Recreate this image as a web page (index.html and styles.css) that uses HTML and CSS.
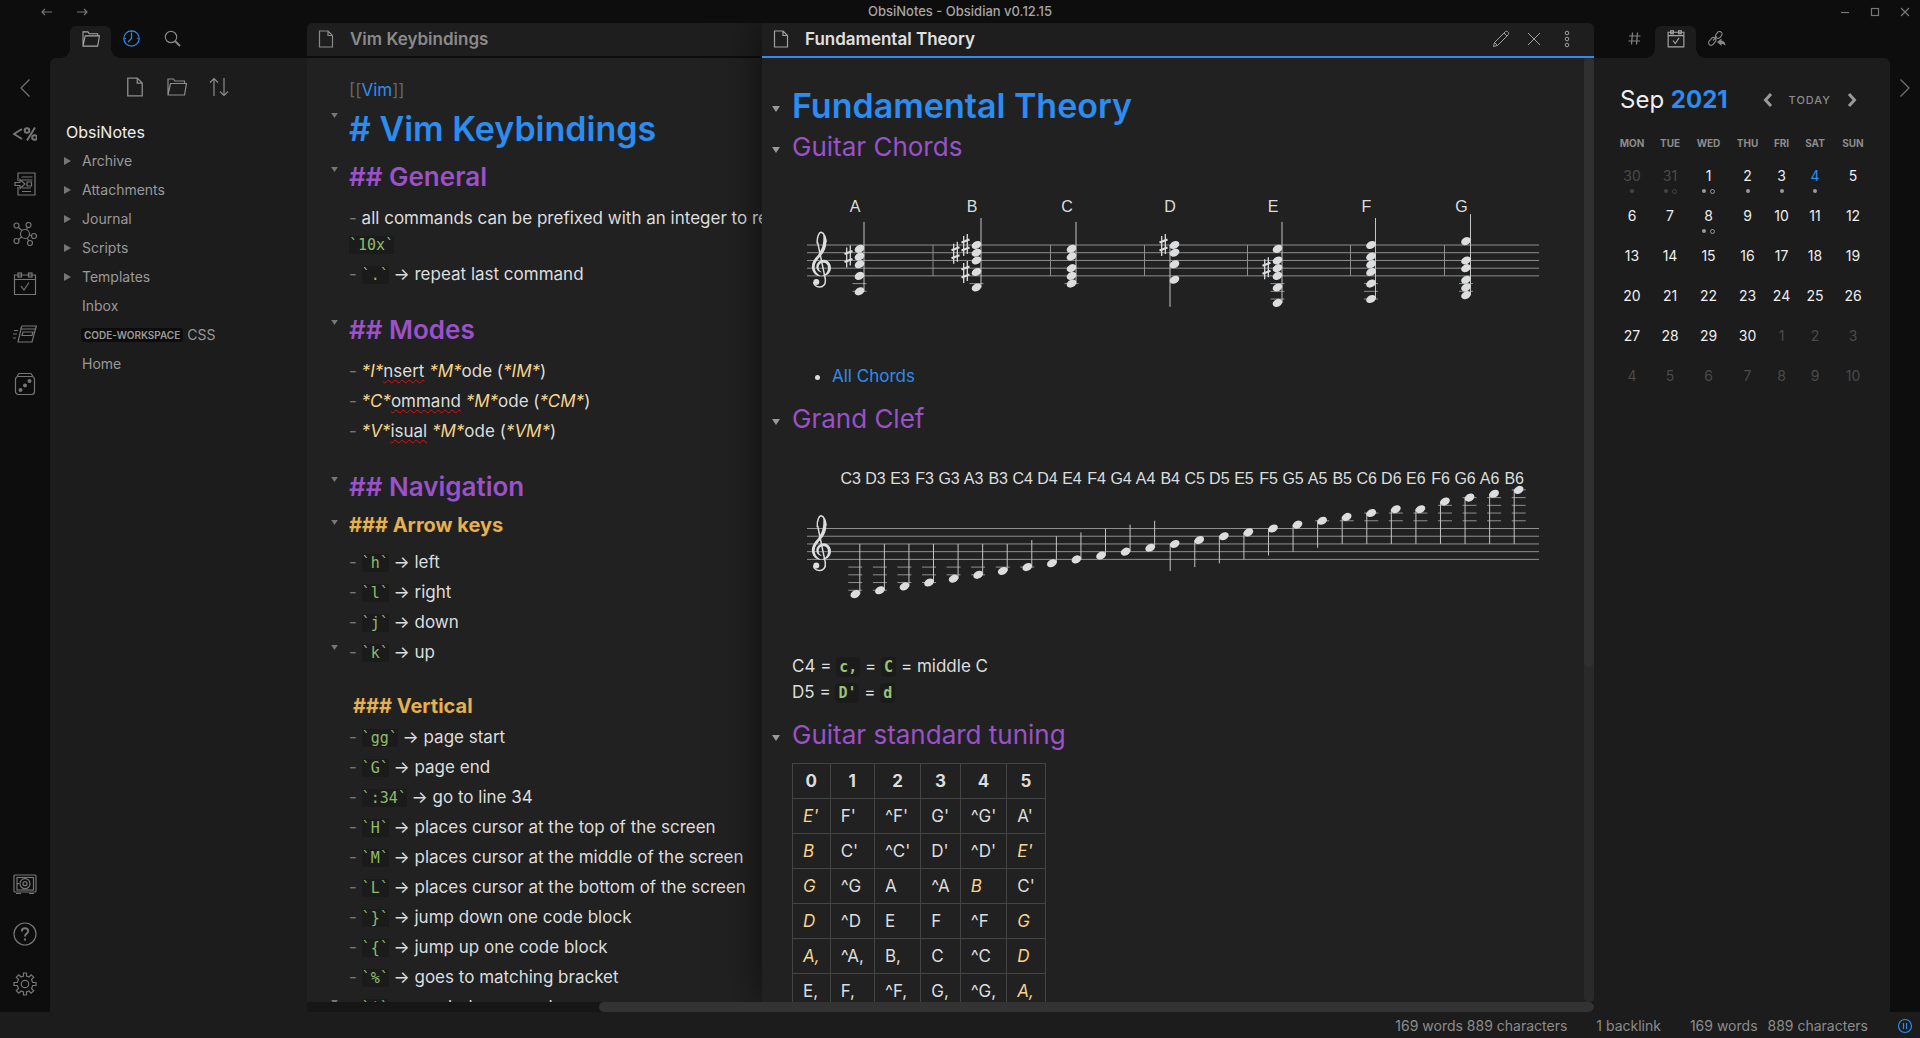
FILE: index.html
```html
<!DOCTYPE html>
<html lang="en">
<head>
<meta charset="utf-8">
<title>ObsiNotes - Obsidian v0.12.15</title>
<link rel="stylesheet" href="styles.css">
</head>
<body>
<svg class="sprite" aria-hidden="true">
  <symbol id="i-file" viewBox="0 0 18 18"><path d="M2.5 1h8.500l4.500 4.500v11.500h-13zM11 1v4.500h4.500"/></symbol>
  <symbol id="i-folder" viewBox="0 0 20 18"><path d="M1 17V1h5.500l1.500 2h9.500v2.500M1 17l2.500-11.500h16L17.500 17z"/></symbol>
  <symbol id="i-left" viewBox="0 0 12 20"><path d="M10.500 1.500L2 10l8.500 8.500"/></symbol>
  <symbol id="i-right" viewBox="0 0 12 20"><path d="M1.500 1.500L10 10l-8.500 8.500"/></symbol>
  <symbol id="i-chev" viewBox="0 0 10 14"><path d="M8 1L2.500 7 8 13"/></symbol>
  <symbol id="i-cal" viewBox="0 0 24 24"><path d="M1.500 3v19.500h21V3zM1.500 7.500h21M8 14l3 4 5-7.500"/><rect x="5" y="1" width="3.500" height="4"/><rect x="15.500" y="1" width="3.500" height="4"/></symbol>
  <symbol id="i-fold" viewBox="0 0 8 6"><path d="M0 0h8L4 6z"/></symbol>
  <symbol id="i-tri" viewBox="0 0 7 8"><path d="M0 0l7 4-7 4z"/></symbol>
</svg>

<header class="titlebar">
  <nav class="history">
    <button aria-label="Back"><svg class="ico" width="12" height="8" viewBox="0 0 12 8"><path d="M11 4H1M4 1L1 4l3 3"/></svg></button>
    <button aria-label="Forward"><svg class="ico" width="12" height="8" viewBox="0 0 12 8"><path d="M1 4h10M8 1l3 3-3 3"/></svg></button>
  </nav>
  <span class="window-title">ObsiNotes - Obsidian v0.12.15</span>
  <div class="window-controls">
    <button aria-label="Minimize"><svg class="ico" width="10" height="10" viewBox="0 0 10 10"><path d="M1 5.500h8"/></svg></button>
    <button aria-label="Maximize"><svg class="ico" width="10" height="10" viewBox="0 0 10 10"><rect x="1.500" y="1.500" width="7" height="7"/></svg></button>
    <button aria-label="Close"><svg class="ico" width="10" height="10" viewBox="0 0 10 10"><path d="M1 1l8 8M9 1L1 9"/></svg></button>
  </div>
</header>

<div class="app">
  <aside class="ribbon">
    <button class="collapse" aria-label="Collapse left sidebar"><svg class="ico" width="12" height="20"><use href="#i-left"/></svg></button>
    <button aria-label="Templater"><svg class="ico bold" width="24" height="16" viewBox="0 0 24 16"><path d="M9 3L1 8l8 5M22 1.500l-8 13"/><circle cx="14" cy="4.500" r="2.300"/><circle cx="21.500" cy="11.500" r="2.300"/></svg></button>
    <button aria-label="Insert template"><svg class="ico" width="22" height="24" viewBox="0 0 22 24"><path d="M4 9V1h17v22H4v-8M7.500 5h11M7.500 8h11M8 16h9M8 19.500h9M1 10.500h5V7.500l5 4.500-5 4.500v-3H1zM13 10h4.500v4H13z"/></svg></button>
    <button aria-label="Open graph view"><svg class="ico" width="24" height="24" viewBox="0 0 24 24"><circle cx="12" cy="12" r="4.500"/><circle cx="3.500" cy="3.500" r="2.500"/><circle cx="15.500" cy="3" r="2.500"/><circle cx="3.500" cy="19" r="2.500"/><circle cx="21" cy="14" r="2.500"/><circle cx="17" cy="21" r="2.500"/><path d="M5.500 5.500l3.500 3M14.500 5.500l-1 2M5.500 17.500l3.500-3M16.500 13l2 .5M14 16l2 3"/></svg></button>
    <button aria-label="Open today's note"><svg class="ico" width="24" height="24"><use href="#i-cal"/></svg></button>
    <button aria-label="Open command palette"><svg class="ico" width="24" height="18" viewBox="0 0 24 18"><path d="M8 4h14.500L19 17H5zM7.500 4L9 1h14.500L22 5M10 7h10l-1 3.500H9zM1 5.500h4M0 9h4M0 13h3"/></svg></button>
    <button aria-label="Open random note"><svg class="ico" width="22" height="24" viewBox="0 0 22 24"><rect x="1.500" y="4.500" width="19" height="18" rx="3"/><path d="M3 4.500L5 1.500h12l2 3"/><g class="solid"><circle cx="6.500" cy="18" r="2"/><circle cx="11" cy="13.500" r="2"/><circle cx="15.500" cy="9" r="2"/></g></svg></button>
    <span class="spacer"></span>
    <button aria-label="Open another vault"><svg class="ico" width="24" height="20" viewBox="0 0 24 20"><rect x="1" y="1" width="22" height="17" rx="1"/><rect x="4" y="3.500" width="16.500" height="12.500"/><circle cx="12" cy="9.700" r="5"/><circle cx="12" cy="9.700" r="2"/><path d="M4 9.700h2M3 19.500h5M16 19.500h5"/></svg></button>
    <button aria-label="Help"><svg class="ico" width="24" height="24" viewBox="0 0 24 24"><circle cx="12" cy="12" r="11"/><path class="thick" d="M8.800 9.500c0-2 1.300-3.200 3.200-3.200s3.200 1.200 3.200 2.900c0 2.300-3.200 2.600-3.200 5.300M12 16.500v2"/></svg></button>
    <button aria-label="Settings"><svg class="ico" width="24" height="24" viewBox="0 0 24 24"><circle cx="12" cy="12" r="3.700"/><path d="M10.500 4V1h3v3l2.500 1 2.200-2.200 2.500 2.500L18.500 7.500l1.200 3H23v3h-3.300l-1.200 3 2.200 2.200-2.500 2.500L16 19l-2.500 1v3h-3v-3L8 19l-2.200 2.200-2.500-2.500 2.200-2.200-1.200-3H1v-3h3.300l1.200-3-2.200-2.200 2.500-2.500L8 5z"/></svg></button>
  </aside>

  <section class="side side-left">
    <nav class="tabs">
      <button class="tab active" aria-label="File explorer"><svg class="ico" width="18" height="16"><use href="#i-folder"/></svg></button>
      <button class="tab accent" aria-label="Recent files"><svg class="ico" width="17" height="17" viewBox="0 0 17 17"><circle cx="8.500" cy="8.500" r="7.700"/><path d="M8.500 3v5.500L5 12M8.500 1v1.500M14 8.500h1.500M1.500 8.500H3"/></svg></button>
      <button class="tab" aria-label="Search"><svg class="ico" width="17" height="17" viewBox="0 0 17 17"><circle cx="7" cy="7" r="5.700"/><path class="thick" d="M11.200 11.200L16 16"/></svg></button>
    </nav>
    <div class="side-body">
      <div class="toolbar">
        <button aria-label="New note"><svg class="ico" width="20" height="20"><use href="#i-file"/></svg></button>
        <button aria-label="New folder"><svg class="ico" width="20" height="18"><use href="#i-folder"/></svg></button>
        <button aria-label="Change sort order"><svg class="ico" width="20" height="20" viewBox="0 0 20 20"><path d="M5 19V1.500M1 5.500l4-4 4 4M15 1v17.500M11 14.500l4 4 4-4"/></svg></button>
      </div>
      <h2 class="vault">ObsiNotes</h2>
      <ul class="tree">
        <li><svg class="tri" width="7" height="8"><use href="#i-tri"/></svg><a href="#">Archive</a></li>
        <li><svg class="tri" width="7" height="8"><use href="#i-tri"/></svg><a href="#">Attachments</a></li>
        <li><svg class="tri" width="7" height="8"><use href="#i-tri"/></svg><a href="#">Journal</a></li>
        <li><svg class="tri" width="7" height="8"><use href="#i-tri"/></svg><a href="#">Scripts</a></li>
        <li><svg class="tri" width="7" height="8"><use href="#i-tri"/></svg><a href="#">Templates</a></li>
        <li><a href="#">Inbox</a></li>
        <li><a href="#"><span class="badge">CODE-WORKSPACE</span>CSS</a></li>
        <li><a href="#">Home</a></li>
      </ul>
    </div>
  </section>

  <main class="workspace">
    <div class="panes">
      <article class="pane source">
        <header class="pane-head">
          <svg class="ico" width="18" height="18"><use href="#i-file"/></svg>
          <h1>Vim Keybindings</h1>
        </header>
        <div class="editor">
          <div class="ln"><p><span class="dim">[[</span><a href="#">Vim</a><span class="dim">]]</span></p></div>
          <div class="ln h1"><button class="fold" aria-label="Fold"><svg width="7" height="5"><use href="#i-fold"/></svg></button><p># Vim Keybindings</p></div>
          <div class="ln h2 first"><button class="fold" aria-label="Fold"><svg width="7" height="5"><use href="#i-fold"/></svg></button><p>## General</p></div>
          <div class="ln li"><p><i class="dash">-</i> all commands can be prefixed with an integer to repeat them,<br><code>`10x`</code></p></div>
          <div class="ln li"><p><i class="dash">-</i> <code>`.`</code> → repeat last command</p></div>
          <div class="ln h2"><button class="fold" aria-label="Fold"><svg width="7" height="5"><use href="#i-fold"/></svg></button><p>## Modes</p></div>
          <div class="ln li"><p><i class="dash">-</i> <em>*I*</em><u>nsert</u> <em>*M*</em>ode (<em>*IM*</em>)</p></div>
          <div class="ln li"><p><i class="dash">-</i> <em>*C*</em><u>ommand</u> <em>*M*</em>ode (<em>*CM*</em>)</p></div>
          <div class="ln li"><p><i class="dash">-</i> <em>*V*</em><u>isual</u> <em>*M*</em>ode (<em>*VM*</em>)</p></div>
          <div class="ln h2"><button class="fold" aria-label="Fold"><svg width="7" height="5"><use href="#i-fold"/></svg></button><p>## Navigation</p></div>
          <div class="ln h3"><button class="fold" aria-label="Fold"><svg width="7" height="5"><use href="#i-fold"/></svg></button><p>### Arrow keys</p></div>
          <div class="ln li"><p><i class="dash">-</i> <code>`h`</code> → left</p></div>
          <div class="ln li"><p><i class="dash">-</i> <code>`l`</code> → right</p></div>
          <div class="ln li"><p><i class="dash">-</i> <code>`j`</code> → down</p></div>
          <div class="ln li"><button class="fold" aria-label="Fold"><svg width="7" height="5"><use href="#i-fold"/></svg></button><p><i class="dash">-</i> <code>`k`</code> → up</p></div>
          <div class="ln h3 indent"><p>### Vertical</p></div>
          <div class="ln li"><p><i class="dash">-</i> <code>`gg`</code> → page start</p></div>
          <div class="ln li"><p><i class="dash">-</i> <code>`G`</code> → page end</p></div>
          <div class="ln li"><p><i class="dash">-</i> <code>`:34`</code> → go to line 34</p></div>
          <div class="ln li"><p><i class="dash">-</i> <code>`H`</code> → places cursor at the top of the screen</p></div>
          <div class="ln li"><p><i class="dash">-</i> <code>`M`</code> → places cursor at the middle of the screen</p></div>
          <div class="ln li"><p><i class="dash">-</i> <code>`L`</code> → places cursor at the bottom of the screen</p></div>
          <div class="ln li"><p><i class="dash">-</i> <code>`}`</code> → jump down one code block</p></div>
          <div class="ln li"><p><i class="dash">-</i> <code>`{`</code> → jump up one code block</p></div>
          <div class="ln li"><p><i class="dash">-</i> <code>`%`</code> → goes to matching bracket</p></div>
          <div class="ln li"><button class="fold" aria-label="Fold"><svg width="7" height="5"><use href="#i-fold"/></svg></button><p><i class="dash">-</i> <code>`*`</code> → symbol one word</p></div>
        </div>
      </article>

      <article class="pane preview">
        <header class="pane-head active">
          <svg class="ico" width="18" height="18"><use href="#i-file"/></svg>
          <h1>Fundamental Theory</h1>
          <button aria-label="Edit"><svg class="ico" width="18" height="18" viewBox="0 0 18 18"><path d="M1.500 16.500l1-4L13.500 1.500c1.500-1 4 1 3 3L5.500 15.500zM12 3l3 3M2.500 12.500l3 3"/></svg></button>
          <button aria-label="Close"><svg class="ico" width="14" height="14" viewBox="0 0 14 14"><path d="M1 1l12 12M13 1L1 13"/></svg></button>
          <button aria-label="More options"><svg class="ico" width="6" height="18" viewBox="0 0 6 18"><circle cx="3" cy="3" r="1.800"/><circle cx="3" cy="9" r="1.800"/><circle cx="3" cy="15" r="1.800"/></svg></button>
        </header>
        <div class="reader">
          <div class="doc">
            <h1><button class="fold" aria-label="Fold"><svg width="8" height="6"><use href="#i-fold"/></svg></button>Fundamental Theory</h1>
            <h2><button class="fold" aria-label="Fold"><svg width="8" height="6"><use href="#i-fold"/></svg></button>Guitar Chords</h2>
            <svg class="score" id="chords" viewBox="0 0 762 172"></svg>
            <ul><li><a href="#">All Chords</a></li></ul>
            <h2><button class="fold" aria-label="Fold"><svg width="8" height="6"><use href="#i-fold"/></svg></button>Grand Clef</h2>
            <svg class="score" id="clef" viewBox="0 0 762 180"></svg>
            <p>C4 = <code>c,</code> = <code>C</code> = middle C<br>D5 = <code>D'</code> = <code>d</code></p>
            <h2><button class="fold" aria-label="Fold"><svg width="8" height="6"><use href="#i-fold"/></svg></button>Guitar standard tuning</h2>
            <table class="tuning">
              <thead><tr><th>0</th><th>1</th><th>2</th><th>3</th><th>4</th><th>5</th></tr></thead>
              <tbody>
                <tr><td><em>E'</em></td><td>F'</td><td>^F'</td><td>G'</td><td>^G'</td><td>A'</td></tr>
                <tr><td><em>B</em></td><td>C'</td><td>^C'</td><td>D'</td><td>^D'</td><td><em>E'</em></td></tr>
                <tr><td><em>G</em></td><td>^G</td><td>A</td><td>^A</td><td><em>B</em></td><td>C'</td></tr>
                <tr><td><em>D</em></td><td>^D</td><td>E</td><td>F</td><td>^F</td><td><em>G</em></td></tr>
                <tr><td><em>A,</em></td><td>^A,</td><td>B,</td><td>C</td><td>^C</td><td><em>D</em></td></tr>
                <tr><td>E,</td><td>F,</td><td>^F,</td><td>G,</td><td>^G,</td><td><em>A,</em></td></tr>
              </tbody>
            </table>
          </div>
          <div class="vscroll"><span></span></div>
        </div>
      </article>
    </div>
    <div class="hscroll"><span></span></div>
  </main>

  <section class="side side-right">
    <nav class="tabs">
      <button class="tab" aria-label="Tags"><svg class="ico" width="13" height="13" viewBox="0 0 13 13"><path d="M4.500 .5l-1 12M9.500 .5l-1 12M1 4h11.500M.5 9H12"/></svg></button>
      <button class="tab active" aria-label="Calendar"><svg class="ico thin" width="18" height="18"><use href="#i-cal"/></svg></button>
      <button class="tab" aria-label="Backlinks"><svg class="ico" width="18" height="16" viewBox="0 0 18 16"><rect x="7" y="1.500" width="7.500" height="5" rx="2.500" transform="rotate(-50 10.700 4)"/><rect x="0" y="8" width="8.500" height="5" rx="2.500" transform="rotate(-50 4.200 10.500)"/><path d="M5 9.500l4-4"/><path class="solid" d="M9 11l4.500-3.500v2c3 .5 4 2.500 4 5.500-1-1.500-2-2-4-2v2z"/></svg></button>
    </nav>
    <div class="side-body calendar">
      <div class="cal-head">
        <h2>Sep <b>2021</b></h2>
        <button aria-label="Previous month"><svg class="ico" width="10" height="14"><use href="#i-chev"/></svg></button>
        <button class="today">TODAY</button>
        <button aria-label="Next month"><svg class="ico flip" width="10" height="14"><use href="#i-chev"/></svg></button>
      </div>
      <table>
        <colgroup><col class="c38"><col class="c38"><col class="c39"><col class="c39"><col class="c29"><col class="c38"><col class="c38"></colgroup>
        <thead><tr><th>MON</th><th>TUE</th><th>WED</th><th>THU</th><th>FRI</th><th>SAT</th><th>SUN</th></tr></thead>
        <tbody>
          <tr><td class="out">30<span class="dots"><i></i></span></td><td class="out">31<span class="dots"><i></i><i class="o"></i></span></td><td>1<span class="dots"><i></i><i class="o"></i></span></td><td>2<span class="dots"><i></i></span></td><td>3<span class="dots"><i></i></span></td><td class="now">4<span class="dots"><i></i></span></td><td>5</td></tr>
          <tr><td>6</td><td>7</td><td>8<span class="dots"><i></i><i class="o"></i></span></td><td>9</td><td>10</td><td>11</td><td>12</td></tr>
          <tr><td>13</td><td>14</td><td>15</td><td>16</td><td>17</td><td>18</td><td>19</td></tr>
          <tr><td>20</td><td>21</td><td>22</td><td>23</td><td>24</td><td>25</td><td>26</td></tr>
          <tr><td>27</td><td>28</td><td>29</td><td>30</td><td class="out">1</td><td class="out">2</td><td class="out">3</td></tr>
          <tr><td class="out">4</td><td class="out">5</td><td class="out">6</td><td class="out">7</td><td class="out">8</td><td class="out">9</td><td class="out">10</td></tr>
        </tbody>
      </table>
    </div>
  </section>

  <aside class="ribbon right">
    <button aria-label="Collapse right sidebar"><svg class="ico" width="12" height="20"><use href="#i-right"/></svg></button>
  </aside>
</div>

<footer class="status">
  <span>169 words 889 characters</span>
  <span>1 backlink</span>
  <span class="counts"><span>169 words</span><span>889 characters</span></span>
  <svg class="ico accent" width="16" height="16" viewBox="0 0 16 16"><circle cx="8" cy="8" r="6.500"/><path d="M6.500 5v6M9.500 5v6"/></svg>
</footer>
<script src="score.js"></script>
</body>
</html>
```
FILE: styles.css
```css
* { box-sizing: border-box; }

:root {
  --black: #0d0d0d;
  --side: #1c1c1c;
  --page: #212121;
  --head: #1e1e1e;
  --text: #dcddde;
  --muted: #8c8c8c;
  --blue: #2d8cf0;
  --purple: #9b51c9;
  --gold: #e5b050;
  --cream: #f8d48c;
  --green: #8fbc6c;
}

body {
  margin: 0;
  height: 100vh;
  display: flex;
  flex-direction: column;
  overflow: hidden;
  background: var(--black);
  color: var(--text);
  font: 17px/26px Inter, "Liberation Sans", sans-serif;
}

h1, h2, p, ul { margin: 0; padding: 0; font-weight: inherit; }
a { color: inherit; text-decoration: none; }
button {
  display: flex;
  align-items: center;
  justify-content: center;
  padding: 0;
  border: 0;
  background: none;
  color: inherit;
  font: inherit;
}
.sprite { display: none; }
.ico { display: block; flex: none; fill: none; stroke: currentColor; stroke-width: 1.2; }
.ico.bold, .thick { stroke-width: 2; }
.ico.thin { stroke-width: 1.5; }
.ico .solid { fill: currentColor; stroke: none; }

/* title bar */
.titlebar {
  flex: none;
  height: 23px;
  display: grid;
  grid-template-columns: 1fr auto 1fr;
  align-items: center;
  color: #777;
}
.history { display: flex; gap: 23px; padding-left: 41px; }
.window-title { color: #a6a6a6; font-size: 13px; font-weight: 500; line-height: 23px; }
.window-controls { display: flex; justify-content: flex-end; gap: 20px; padding-right: 10px; }

.app { flex: 1; min-height: 0; display: flex; }

/* ribbons */
.ribbon {
  flex: none;
  width: 50px;
  display: flex;
  flex-direction: column;
  gap: 26px;
  padding: 53px 0 16px;
  color: #767676;
}
.ribbon button { height: 24px; }
.ribbon .collapse { margin-bottom: -4px; }
.ribbon.right { width: 30px; }
.spacer { flex: 1; }

/* sidebars */
.side { flex: none; display: flex; flex-direction: column; color: var(--muted); }
.side-left { width: 257px; }
.side-right { width: 296px; }
.tabs { flex: none; height: 35px; display: flex; align-items: flex-end; padding-left: 20px; }
.tab { position: relative; width: 41px; height: 32px; padding-bottom: 7px; color: #858585; }
.tab.active { background: var(--side); border-radius: 6px 6px 0 0; color: #a8a8a8; }
.tab.active::before, .tab.active::after {
  content: "";
  position: absolute;
  bottom: 0;
  width: 10px;
  height: 10px;
}
.tab.active::before { left: -10px; background: radial-gradient(circle at 0 0, transparent 10px, var(--side) 10px); }
.tab.active::after { right: -10px; background: radial-gradient(circle at 100% 0, transparent 10px, var(--side) 10px); }
.accent, .tab.accent { color: var(--blue); }
.side-body { flex: 1; background: var(--side); border-radius: 6px 0 0 0; }
.side-right .side-body { border-radius: 0 6px 0 0; }
.toolbar { height: 60px; display: flex; align-items: center; justify-content: center; gap: 22px; padding: 0 4px 3px 0; }

.vault { padding-left: 16px; color: #eee; font-size: 16px; line-height: 28px; }
.tree { list-style: none; font-size: 14px; line-height: 29px; color: #999; }
.tree li { display: flex; align-items: center; padding-left: 32px; }
.tree li:has(.tri) { padding-left: 14px; gap: 11px; }
.tri { fill: #767676; }
.badge {
  display: inline-block;
  margin: 0 4px 0 -1px;
  padding: 0 3px;
  border-radius: 3px;
  background: var(--black);
  font-size: 10px;
  font-weight: 600;
  line-height: 14px;
  vertical-align: 1px;
}

/* workspace */
.workspace { flex: 1; min-width: 0; display: flex; flex-direction: column; }
.panes { flex: 1; min-height: 0; display: flex; overflow: hidden; border-radius: 6px 6px 0 0; }
.pane { min-width: 0; display: flex; flex-direction: column; background: var(--page); }
.source { flex: 455; overflow: hidden; }
.preview { flex: 832; position: relative; box-shadow: 0 0 40px rgba(0, 0, 0, .6); }
.pane-head {
  flex: none;
  height: 35px;
  display: flex;
  align-items: center;
  padding: 0 24px 1px 10px;
  background: var(--head);
  border-bottom: 2px solid var(--black);
  color: #8a8a8a;
}
.pane-head h1 { flex: 1; padding-left: 15px; font-size: 17px; font-weight: 600; line-height: 26px; }
.pane-head.active { border-color: var(--blue); color: #a0a0a0; }
.pane-head.active h1 { color: #e0e0e0; }
.pane-head button .ico { stroke-width: 1; }
.pane-head button + button { margin-left: 17px; }
.pane-head button:last-child { margin-left: 23px; }

/* markdown source editor */
.editor { flex: 1; min-height: 0; overflow: hidden; padding-top: 19px; white-space: nowrap; }
.ln { display: grid; grid-template-columns: 42px 1fr; align-items: start; }
.ln p { grid-column: 2; }
.editor .fold { grid-row: 1; justify-content: flex-start; padding-left: 24px; height: 24px; }
.editor .li .fold { height: 16px; }
.fold svg { fill: #777; }
.editor .h1 { color: var(--blue); font-size: 34px; font-weight: 600; line-height: 51px; }
.editor .h2 { padding: 21px 0 7px; color: var(--purple); font-size: 26px; font-weight: 600; line-height: 39px; }
.editor .h2.first { padding-top: 3px; }
.editor .h2 + .h3 { margin-top: -7px; }
.editor .h3 { padding: 4px 0 6px; color: var(--gold); font-size: 20px; font-weight: 700; line-height: 31px; }
.editor .h3.indent { padding: 24px 0 0 4px; }
.editor .li { padding: 2px 0; }
.dash { color: #777; font-style: normal; }
.dim { color: #666; }
.editor a, .doc a { color: var(--blue); }
em { color: var(--cream); }
u { text-decoration: underline wavy #e01010 1px; text-underline-offset: 2px; }
code { font: 15px/18px "DejaVu Sans Mono", monospace; color: var(--green); background: #1b1b1b; }

/* rendered note */
.reader { flex: 1; min-height: 0; display: flex; }
.doc { flex: 1; min-width: 0; overflow: hidden; padding: 26px 30px 0; }
.doc h1, .doc h2 { display: flex; align-items: center; }
.doc h1 { color: var(--blue); font-size: 34px; font-weight: 600; line-height: 44px; }
.doc h2 { margin-top: 11px; color: var(--purple); font-size: 26px; font-weight: 400; line-height: 37px; }
.doc h1 + h2 { margin-top: 0; }
.doc .fold { width: 30px; margin-left: -30px; padding: 6px 0 0 10px; justify-content: flex-start; }
.doc .fold svg { fill: #999; }
.doc ul { margin-top: 13px; padding-left: 40px; }
.doc p { margin-top: 21px; }
.doc code { padding: 1px 3px; border-radius: 4px; font-weight: 700; color: #98c379; }
.score { display: block; width: 100%; margin-top: 15px; fill: var(--text); }
.doc h1 + h2 + .score { margin-top: 13px; }
.score text { font: 16px "Liberation Sans", Arial, sans-serif; text-anchor: middle; }
.score .staff { stroke: #8f8f8f; stroke-width: 1; fill: none; }
.score .stem { stroke: #c4c4c4; stroke-width: 1; fill: none; }
.score .line { stroke: var(--text); stroke-width: 1.3; fill: none; }
.score .slant { stroke: var(--text); stroke-width: 2.2; fill: none; }
.tuning { margin-top: 10px; border-collapse: collapse; }
.tuning th, .tuning td { padding: 4px 10px; border: 1px solid #444; text-align: left; }
.tuning th { text-align: center; font-weight: 700; }

/* scrollbars */
.vscroll { flex: none; width: 10px; background: #2a2a2a; border-radius: 0 0 5px 5px; }
.vscroll span { display: block; height: 64.5%; border-radius: 5px; background: #303030; }
.hscroll { flex: none; height: 10px; background: #161616; display: flex; justify-content: flex-end; }
.hscroll span { width: 77.3%; border-radius: 5px; background: #333; }

/* calendar */
.calendar { padding: 24px 24px 0 19px; }
.cal-head { display: flex; align-items: center; height: 36px; padding: 0 9px 0 7px; }
.cal-head h2 { flex: 1; color: #eee; font-size: 24px; line-height: 34px; }
.cal-head b { color: var(--blue); font-weight: 700; }
.cal-head .ico { stroke-width: 3; stroke: #999; }
.flip { transform: scaleX(-1); }
.today { margin: 0 16px; font-size: 11px; font-weight: 500; letter-spacing: 1px; }
.calendar table { margin-top: 7px; border-collapse: collapse; table-layout: fixed; width: 259px; text-align: center; }
.c29 { width: 29px; } .c38 { width: 38px; } .c39 { width: 39px; }
.calendar th { height: 36px; padding: 0; font-size: 10px; font-weight: 700; line-height: 36px; text-align: center; }
.calendar td { height: 40px; padding: 5px 0 0; vertical-align: top; color: #eee; font-size: 14px; line-height: 20px; }
.calendar td.out { color: #4a4a4a; }
.calendar td.now { color: var(--blue); }
.dots { display: flex; justify-content: center; gap: 4px; padding-top: 3px; color: #999; }
.out .dots { color: #444; }
.dots i { width: 4px; height: 4px; border-radius: 50%; background: currentColor; }
.dots .o { width: 5px; height: 5px; background: none; border: 1px solid currentColor; }

/* status bar */
.status {
  flex: none;
  height: 26px;
  display: flex;
  align-items: center;
  justify-content: flex-end;
  gap: 29px;
  padding: 2px 7px 0 0;
  background: var(--side);
  color: var(--muted);
  font-size: 14px;
}
.counts { display: flex; gap: 10px; }
```
FILE: score.js
```js
// Engraves the two staves of the note. Pitches are staff steps counted
// downward from the top line: 0 is the top line, 8 the bottom line.
const STEP = 3.86;

const path = (cls, d) => `<path class="${cls}" d="${d}"/>`;
const head = (x, y) => `<ellipse cx="${x}" cy="${y}" rx="5.1" ry="3.7" transform="rotate(-28 ${x} ${y})"/>`;

function clef(top) {
  return `<g transform="translate(-32 ${top}) scale(.3333) translate(0 -734)">
    <path fill="none" stroke="#dcddde" stroke-width="4.500" d="M172 730C170 708 178 696 184 696C192 698 198 712 198 726M173 726L196 836C198 854 188 861 178 860C168 860 161 853 161 846"/>
    <circle cx="169" cy="845" r="9"/>
    <path d="M190 702C190 722 192 738 174 764C160 778 154 790 156 803C157 817 168 828 184 828C172 822 164 812 164 800C164 788 172 778 182 767C194 755 200 740 199 722C198 710 194 704 190 702Z"/>
    <path d="M192 778C204 778 213 790 213 802C213 818 200 829 182 828C198 823 204 814 204 803C204 793 199 787 190 787C181 787 176 793 176 800C176 808 179 812 186 816C175 815 169 808 169 799C169 788 180 778 192 778Z"/>
  </g>`;
}

function sharp(x, y) {
  return path('line', `M${x - 1.8} ${y - 9}V${y + 11}M${x + 1.8} ${y - 11}V${y + 9}`)
    + path('slant', `M${x - 4} ${y - 2.500}l8-3M${x - 4} ${y + 5.500}l8-3`);
}

function draw(id, top, labelY, chords, bars) {
  const y = p => top + p * STEP;
  let out = '';
  for (let p = 0; p <= 8; p += 2) out += path('staff', `M15 ${y(p)}H747`);
  for (const x of bars) out += path('staff', `M${x} ${y(0)}V${y(8)}`);
  for (const { label, x, notes, sharps = [], down } of chords) {
    const hi = Math.min(...notes), lo = Math.max(...notes);
    for (let p = 10; p <= lo; p += 2) out += path('staff', `M${x - 7} ${y(p)}h14`);
    for (let p = -2; p >= hi; p -= 2) out += path('staff', `M${x - 7} ${y(p)}h14`);
    out += path('stem', down
      ? `M${x - 4.5} ${y(hi)}V${y(Math.max(lo + 7, 4))}`
      : `M${x + 4.5} ${y(lo)}V${y(Math.min(hi - 7, 4))}`);
    for (const [dx, p] of sharps) out += sharp(x - dx, y(p));
    for (const p of notes) out += head(x, y(p));
    out += `<text x="${x - 4.5}" y="${labelY}">${label}</text>`;
  }
  document.getElementById(id).innerHTML = out + clef(top);
}

draw('chords', 67, 34, [
  { label: 'A', x: 67.5, notes: [1, 3, 5, 8, 12], sharps: [[11, 3]] },
  { label: 'B', x: 184.5, notes: [0, 2, 4, 7, 11], sharps: [[11, 0], [21, 2], [11, 7]] },
  { label: 'C', x: 279.5, notes: [1, 3, 6, 8, 10] },
  { label: 'D', x: 382.5, notes: [0, 2, 5, 9], sharps: [[11, 0]], down: true },
  { label: 'E', x: 485.5, notes: [1, 4, 6, 8, 11, 15], sharps: [[11, 6]] },
  { label: 'F', x: 579, notes: [0, 3, 5, 7, 10, 14] },
  { label: 'G', x: 674, notes: [-1, 4, 6, 9, 11, 13] },
], [141, 258.5, 352.5, 455.5, 558.5, 652.5]);

const scale = [];
for (let i = 0; i < 28; i++) {
  const label = 'CDEFGAB'[i % 7] + (3 + Math.floor(i / 7));
  const p = label === 'E6' ? -5 : 17 - i;
  scale.push({ label, x: 63.3 + i * 24.57, notes: [p], down: i > 12 });
}
draw('clef', 76.5, 32, scale, []);
```
